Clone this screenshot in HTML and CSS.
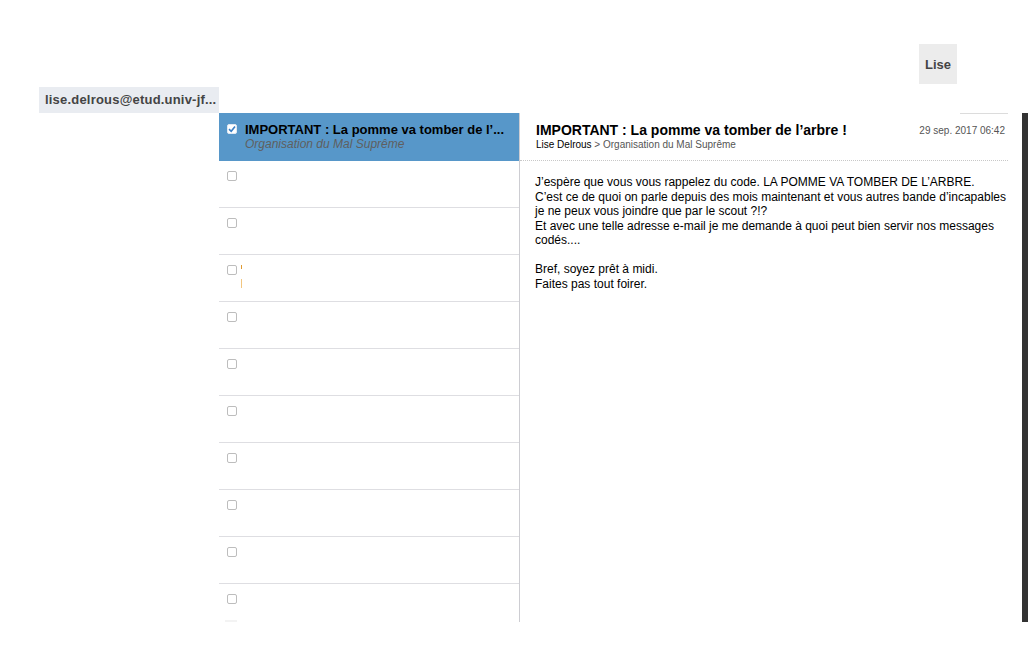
FILE: index.html
```html
<!DOCTYPE html>
<html lang="fr">
<head>
<meta charset="utf-8">
<title>Messagerie</title>
<link rel="stylesheet" href="styles.css">
</head>
<body>
<div class="topbar">
  <div class="user-btn">Lise</div>
</div>
<div class="account-row">
  <div class="account">lise.delrous@etud.univ-jf...</div>
</div>
<div class="main">
  <div class="list">
    <div class="row selected">
      <span class="cb checked"><svg width="8" height="8" viewBox="0 0 8 8"><path d="M1 4.2 L3.2 6.3 L7 1.5" fill="none" stroke="#3b7fc4" stroke-width="1.6"/></svg></span>
      <div class="row-text">
        <div class="row-title">IMPORTANT : La pomme va tomber de l’...</div>
        <div class="row-sub">Organisation du Mal Suprême</div>
      </div>
    </div>
    <div class="row"><span class="cb"></span></div>
    <div class="row"><span class="cb"></span></div>
    <div class="row"><span class="cb"></span><div class="marks"><span class="mark dot"></span><span class="mark bar"></span></div></div>
    <div class="row"><span class="cb"></span></div>
    <div class="row"><span class="cb"></span></div>
    <div class="row"><span class="cb"></span></div>
    <div class="row"><span class="cb"></span></div>
    <div class="row"><span class="cb"></span></div>
    <div class="row"><span class="cb"></span></div>
    <div class="row"><span class="cb"></span><span class="ghost"></span></div>
  </div>
  <div class="reader">
    <div class="reader-top"><span class="top-line"></span></div>
    <div class="reader-head">
      <div class="head-left">
        <div class="subject">IMPORTANT : La pomme va tomber de l’arbre !</div>
        <div class="from"><span class="sender">Lise Delrous</span> &gt; Organisation du Mal Suprême</div>
      </div>
      <div class="date">29 sep. 2017 06:42</div>
    </div>
    <div class="body">
      <p>J’espère que vous vous rappelez du code. LA POMME VA TOMBER DE L’ARBRE.<br>
      C’est ce de quoi on parle depuis des mois maintenant et vous autres bande d’incapables je ne peux vous joindre que par le scout ?!?<br>
      Et avec une telle adresse e-mail je me demande à quoi peut bien servir nos messages codés....</p>
      <p>Bref, soyez prêt à midi.<br>
      Faites pas tout foirer.</p>
    </div>
  </div>
  <div class="side-bar"></div>
</div>
</body>
</html>
```
FILE: styles.css
```css
* { box-sizing: border-box; }
html, body { margin: 0; padding: 0; background: #fff; }
body {
  font-family: "Liberation Sans", Arial, sans-serif;
  color: #000;
  width: 1028px;
  height: 662px;
  overflow: hidden;
}
.topbar {
  display: flex;
  justify-content: flex-end;
  padding: 44px 71px 0 0;
  height: 87px;
}
.user-btn {
  width: 38px;
  height: 40px;
  background: #ececec;
  color: #444;
  font-weight: bold;
  font-size: 13px;
  display: flex;
  align-items: center;
  justify-content: center;
}
.account-row {
  display: flex;
  padding-left: 39px;
  height: 26px;
}
.account {
  width: 180px;
  height: 26px;
  background: #e9ecf1;
  color: #444;
  font-weight: bold;
  font-size: 13px;
  letter-spacing: 0.2px;
  line-height: 26px;
  padding-left: 6px;
  white-space: nowrap;
  overflow: hidden;
}
.main {
  display: flex;
  height: 509px;
  padding-left: 219px;
}
.list {
  width: 301px;
  border-right: 1px solid #cdcdd2;
  overflow: hidden;
  flex-shrink: 0;
}
.row {
  height: 47px;
  border-bottom: 1px solid #dedee2;
  display: flex;
  align-items: flex-start;
  padding: 10px 0 0 8px;
  gap: 8px;
  position: relative;
}
.row.selected {
  background: #5797c9;
  border-bottom-color: #5797c9;
  height: 48px;
  padding-top: 11px;
}
.cb {
  width: 10px;
  height: 10px;
  border: 1px solid #bdbdbd;
  border-radius: 2px;
  flex-shrink: 0;
  display: flex;
  align-items: center;
  justify-content: center;
}
.cb.checked {
  background: #fff;
  border-color: #dfe8f2;
}
.row-text { margin-top: -2px; }
.row-title {
  font-size: 13px;
  font-weight: bold;
  color: #000;
  line-height: 15px;
  white-space: nowrap;
}
.row-sub {
  font-size: 12px;
  font-style: italic;
  color: #5f5f5f;
  line-height: 15px;
}
.marks {
  display: flex;
  flex-direction: column;
  margin-left: -4px;
}
.mark { display: block; width: 1px; }
.mark.dot { height: 4px; margin-top: 0; background: #e09a30; }
.mark.bar { height: 9px; margin-top: 10px; background: #f2c680; }
.ghost {
  position: absolute;
  left: 6px;
  top: 36px;
  width: 12px;
  height: 4px;
  background: #f3f3f3;
}
.reader {
  width: 488px;
  display: flex;
  flex-direction: column;
  flex-shrink: 0;
}
.reader-top {
  display: flex;
  justify-content: flex-end;
  height: 0;
}
.top-line {
  width: 48px;
  height: 1px;
  background: #dcdcdc;
}
.reader-head {
  display: flex;
  justify-content: space-between;
  align-items: flex-start;
  padding: 9px 3px 0 16px;
  height: 48px;
  border-bottom: 1px dotted #c8c8c8;
}
.subject {
  font-size: 14px;
  font-weight: bold;
  line-height: 17px;
}
.from {
  font-size: 10px;
  color: #555;
  line-height: 12px;
}
.sender { color: #000; }
.date {
  font-size: 10px;
  color: #555;
  line-height: 14px;
  padding-top: 2px;
}
.body {
  padding: 14px 0 0 15px;
  font-size: 12px;
  line-height: 14.5px;
}
.body p { margin: 0 0 14.5px 0; }
.side-bar {
  width: 6px;
  margin-left: 14px;
  background: #333;
  height: 509px;
}
```
